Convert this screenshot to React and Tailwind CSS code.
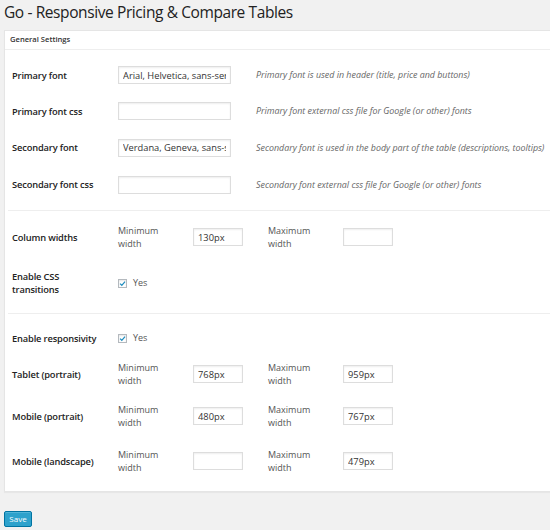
import React from 'react'

const font = { fontFamily: '"Open Sans", "Liberation Sans", sans-serif' }

function TextInput({ value = '', wide }) {
  return (
    <input
      readOnly
      value={value}
      className={`${wide ? 'w-[113px]' : 'w-[50px]'} h-[18px] shrink-0 border border-[#dddddd] bg-white px-[4px] text-[9.3px] text-[#333] shadow-[inset_0_1px_2px_rgba(0,0,0,0.07)] outline-none`}
      style={font}
    />
  )
}

function Check() {
  return (
    <div className="flex items-center gap-[6px]">
      <div className="flex h-[9px] w-[9px] items-center justify-center border border-[#b4b9be] bg-white shadow-[inset_0_1px_2px_rgba(0,0,0,0.1)]">
        <svg width="7" height="7" viewBox="0 0 10 10"><path d="M1.5 5.2 L4 7.6 L8.6 2.2" fill="none" stroke="#1e8cbe" strokeWidth="1.8" /></svg>
      </div>
      <span className="text-[9px] text-[#555]">Yes</span>
    </div>
  )
}

function Label({ children }) {
  return <div className="w-[106px] shrink-0 pr-2 text-[9.3px] font-semibold leading-[13px] tracking-[-0.15px] text-[#222]">{children}</div>
}

function FontRow({ label, value, desc, h }) {
  return (
    <div className={`flex items-center ${h}`}>
      <Label>{label}</Label>
      <TextInput wide value={value} />
      <div className="ml-[25px] whitespace-nowrap text-[8.9px] italic text-[#666]">{desc}</div>
    </div>
  )
}

function WidthRow({ label, min, max, h }) {
  return (
    <div className={`flex items-center ${h}`}>
      <Label>{label}</Label>
      <div className="w-[75px] shrink-0 text-[9px] leading-[13px] text-[#555]">Minimum<br />width</div>
      <TextInput value={min} />
      <div className="ml-[25px] w-[75px] shrink-0 text-[9px] leading-[13px] text-[#555]">Maximum<br />width</div>
      <TextInput value={max} />
    </div>
  )
}

export default function App() {
  return (
    <div className="h-[530px] w-[550px] overflow-hidden bg-[#f1f1f1]" style={font}>
      <h2 className="pl-[4px] pt-[1px] text-[15.5px] leading-[22px] tracking-[-0.4px] text-[#222]">Go - Responsive Pricing &amp; Compare Tables</h2>
      <div className="ml-[4px] mt-[7px] w-[560px] border border-[#e5e5e5] bg-white shadow-[0_1px_1px_rgba(0,0,0,0.04)]">
        <div className="flex h-[19px] items-center border-b border-[#eeeeee] pl-[5px] text-[7.6px] font-semibold text-[#333]">General Settings</div>
        <div className="pl-[7px] pt-[7px] pb-[9px]">
          <FontRow h="h-[36px]" label="Primary font" value="Arial, Helvetica, sans-serif" desc="Primary font is used in header (title, price and buttons)" />
          <FontRow h="h-[36px]" label="Primary font css" desc="Primary font external css file for Google (or other) fonts" />
          <FontRow h="h-[37px]" label="Secondary font" value="Verdana, Geneva, sans-serif" desc="Secondary font is used in the body part of the table (descriptions, tooltips)" />
          <FontRow h="h-[37px]" label="Secondary font css" desc="Secondary font external css file for Google (or other) fonts" />
          <div className="-ml-[4px] mt-[7px] border-t border-[#eeeeee]" />
          <WidthRow h="h-[52px]" label="Column widths" min="130px" max="" />
          <div className="flex h-[40px] items-center">
            <Label>Enable CSS<br />transitions</Label>
            <Check />
          </div>
          <div className="-ml-[4px] mt-[10px] border-t border-[#eeeeee]" />
          <div className="mt-[6px] flex h-[36px] items-center">
            <Label>Enable responsivity</Label>
            <Check />
          </div>
          <WidthRow h="h-[36px]" label="Tablet (portrait)" min="768px" max="959px" />
          <WidthRow h="h-[48px]" label="Mobile (portrait)" min="480px" max="767px" />
          <WidthRow h="h-[42px]" label="Mobile (landscape)" min="" max="479px" />
        </div>
      </div>
      <button className="ml-[4px] mt-[19px] flex h-[16px] w-[28px] items-center justify-center rounded-[2px] border border-[#0074a2] bg-[#2ea2cc] text-[8px] text-white shadow-[inset_0_1px_0_rgba(120,200,230,0.5)]">Save</button>
    </div>
  )
}
